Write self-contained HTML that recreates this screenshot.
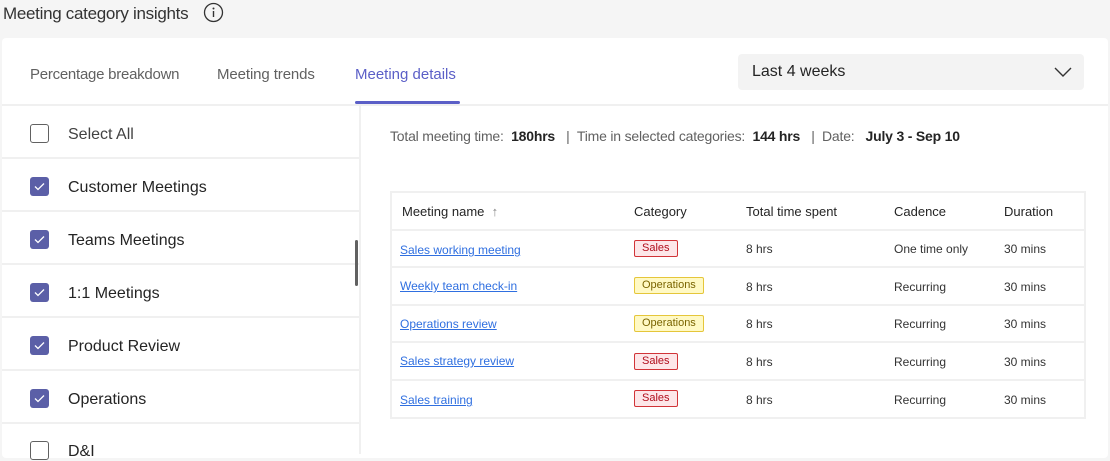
<!DOCTYPE html>
<html><head><style>
*{margin:0;padding:0;box-sizing:border-box}
body{width:1110px;height:454px;background:#f5f5f5;font-family:"Liberation Sans",sans-serif;color:#242424;position:relative;overflow:hidden}
.a{position:absolute;white-space:nowrap}
.card{position:absolute;left:2px;top:38px;width:1106px;height:420px;background:#fff;border-radius:4px}
.cb{position:absolute;left:30px;width:19px;height:19px;border-radius:3px;background:#5b5fa7}
.cb.off{background:#fff;border:1.5px solid #616161}
.cb svg{position:absolute;left:4px;top:5px}
.lbl{position:absolute;left:68px;font-size:16px;color:#242424;margin-top:2px}
.sep{position:absolute;left:2px;width:357px;height:2px;background:#f0f0f0}
.th{font-size:13px;color:#242424;top:204px}
.lnk{font-size:12px;color:#2f6fe0;text-decoration:underline}
.td{font-size:12px;color:#333}
.tag{position:absolute;font-size:11px;height:17px;line-height:15px;padding:0 7px;border-radius:2px}
.sales{background:#fde7e9;border:1px solid #d13438;color:#b10e1c}
.ops{background:#fff9c4;border:1px solid #e5c63a;color:#7a6400}
.rs{position:absolute;left:392px;width:693px;height:2px;background:#f0f0f0}
</style></head><body>
<div class="a" style="left:3px;top:4px;font-size:17px;color:#333;letter-spacing:-0.3px">Meeting category insights</div>
<svg class="a" style="left:203px;top:2px" width="21" height="21" viewBox="0 0 21 21"><circle cx="10.5" cy="10.5" r="9" fill="none" stroke="#333" stroke-width="1.3"/><circle cx="10.5" cy="6.5" r="1" fill="#333"/><path d="M10.5 9v6" stroke="#333" stroke-width="1.4"/></svg>
<div class="card"></div>
<div class="a" style="left:30px;top:66px;font-size:15px;color:#616161;letter-spacing:-0.25px">Percentage breakdown</div>
<div class="a" style="left:217px;top:66px;font-size:15px;color:#616161;letter-spacing:-0.1px">Meeting trends</div>
<div class="a" style="left:355px;top:66px;font-size:15px;color:#5b5fc7">Meeting details</div>
<div class="a" style="left:355px;top:101px;width:105px;height:3px;background:#5b5fc7;border-radius:2px"></div>
<div class="a" style="left:738px;top:54px;width:346px;height:36px;background:#f3f3f3;border-radius:4px"></div>
<div class="a" style="left:752px;top:63px;font-size:16px;color:#242424">Last 4 weeks</div>
<svg class="a" style="left:1053px;top:65px" width="20" height="14" viewBox="0 0 20 14"><path d="M2 3l8 8 8-8" fill="none" stroke="#333" stroke-width="1.4"/></svg>
<div class="a" style="left:2px;top:104px;width:1106px;height:2px;background:#f0f0f0"></div>
<div class="a" style="left:359px;top:105px;width:2px;height:349px;background:#f0f0f0"></div>

<div class="cb off" style="top:124px"></div><div class="lbl" style="top:124px;color:#424242">Select All</div>
<div class="sep" style="top:157px"></div>
<div class="cb" style="top:177px"><svg width="11" height="9" viewBox="0 0 11 9"><path d="M1 4.5l3 3 6-6" fill="none" stroke="#fff" stroke-width="1.3"/></svg></div><div class="lbl" style="top:177px">Customer Meetings</div>
<div class="sep" style="top:210px"></div>
<div class="cb" style="top:230px"><svg width="11" height="9" viewBox="0 0 11 9"><path d="M1 4.5l3 3 6-6" fill="none" stroke="#fff" stroke-width="1.3"/></svg></div><div class="lbl" style="top:230px">Teams Meetings</div>
<div class="sep" style="top:263px"></div>
<div class="cb" style="top:283px"><svg width="11" height="9" viewBox="0 0 11 9"><path d="M1 4.5l3 3 6-6" fill="none" stroke="#fff" stroke-width="1.3"/></svg></div><div class="lbl" style="top:283px">1:1 Meetings</div>
<div class="sep" style="top:316px"></div>
<div class="cb" style="top:336px"><svg width="11" height="9" viewBox="0 0 11 9"><path d="M1 4.5l3 3 6-6" fill="none" stroke="#fff" stroke-width="1.3"/></svg></div><div class="lbl" style="top:336px">Product Review</div>
<div class="sep" style="top:369px"></div>
<div class="cb" style="top:389px"><svg width="11" height="9" viewBox="0 0 11 9"><path d="M1 4.5l3 3 6-6" fill="none" stroke="#fff" stroke-width="1.3"/></svg></div><div class="lbl" style="top:389px">Operations</div>
<div class="sep" style="top:422px"></div>
<div class="cb off" style="top:441px"></div><div class="lbl" style="top:441px">D&amp;I</div>
<div class="a" style="left:355px;top:240px;width:3px;height:46px;background:#616161;border-radius:2px;z-index:2"></div>

<div class="a" style="left:390px;top:128px;font-size:14px;color:#616161;letter-spacing:-0.2px">Total meeting time:&nbsp; <b style="color:#242424">180hrs</b> &nbsp; | &nbsp;Time in selected categories:&nbsp; <b style="color:#242424">144 hrs</b> &nbsp; | &nbsp;Date: &nbsp; <b style="color:#242424">July 3 - Sep 10</b></div>

<div class="a" style="left:390px;top:191px;width:696px;height:228px;border:2px solid #f0f0f0"></div>
<div class="a th" style="left:402px">Meeting name &nbsp;<span style="color:#888">↑</span></div>
<div class="a th" style="left:634px">Category</div>
<div class="a th" style="left:746px">Total time spent</div>
<div class="a th" style="left:894px">Cadence</div>
<div class="a th" style="left:1004px">Duration</div>
<div class="rs" style="top:229px"></div>
<div class="rs" style="top:266px"></div>
<div class="rs" style="top:304px"></div>
<div class="rs" style="top:341px"></div>
<div class="rs" style="top:379px"></div>

<div class="a lnk" style="left:400px;top:243px">Sales working meeting</div>
<div class="tag sales" style="left:634px;top:240px">Sales</div>
<div class="a td" style="left:746px;top:242px">8 hrs</div><div class="a td" style="left:894px;top:242px">One time only</div><div class="a td" style="left:1004px;top:242px">30 mins</div>

<div class="a lnk" style="left:400px;top:279px">Weekly team check-in</div>
<div class="tag ops" style="left:634px;top:277px">Operations</div>
<div class="a td" style="left:746px;top:280px">8 hrs</div><div class="a td" style="left:894px;top:280px">Recurring</div><div class="a td" style="left:1004px;top:280px">30 mins</div>

<div class="a lnk" style="left:400px;top:317px">Operations review</div>
<div class="tag ops" style="left:634px;top:315px">Operations</div>
<div class="a td" style="left:746px;top:317px">8 hrs</div><div class="a td" style="left:894px;top:317px">Recurring</div><div class="a td" style="left:1004px;top:317px">30 mins</div>

<div class="a lnk" style="left:400px;top:354px">Sales strategy review</div>
<div class="tag sales" style="left:634px;top:353px">Sales</div>
<div class="a td" style="left:746px;top:355px">8 hrs</div><div class="a td" style="left:894px;top:355px">Recurring</div><div class="a td" style="left:1004px;top:355px">30 mins</div>

<div class="a lnk" style="left:400px;top:393px">Sales training</div>
<div class="tag sales" style="left:634px;top:390px">Sales</div>
<div class="a td" style="left:746px;top:393px">8 hrs</div><div class="a td" style="left:894px;top:393px">Recurring</div><div class="a td" style="left:1004px;top:393px">30 mins</div>
</body></html>
